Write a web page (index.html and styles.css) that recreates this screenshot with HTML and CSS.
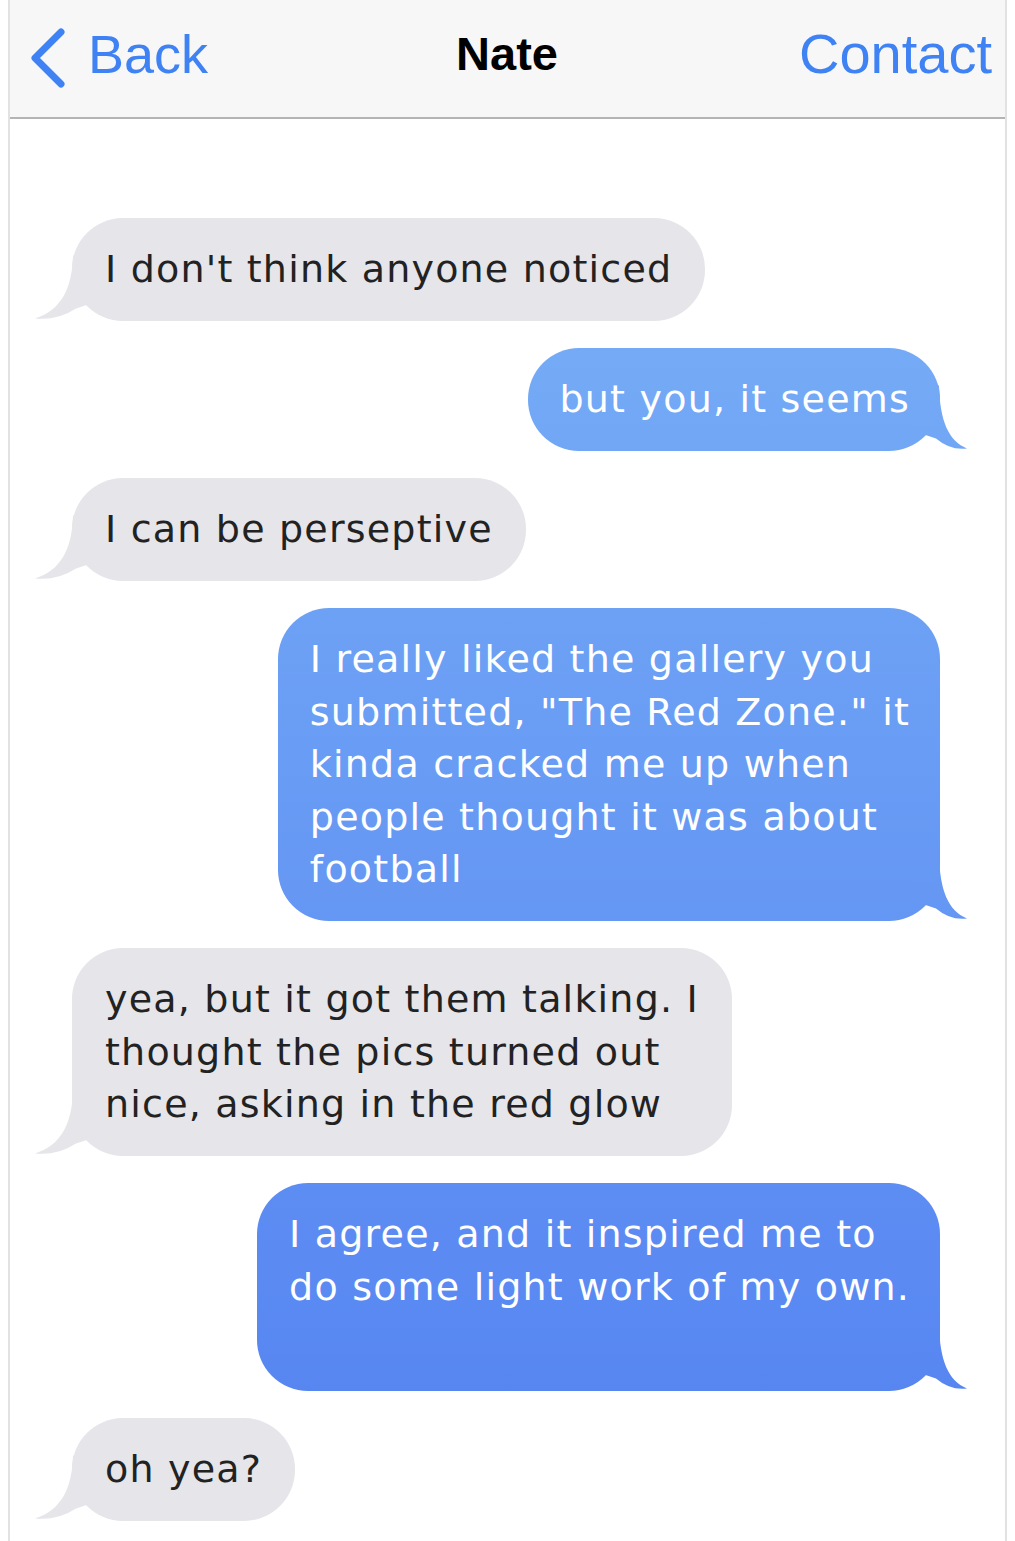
FILE: index.html
```html
<!DOCTYPE html>
<html lang="en">
<head>
  <meta charset="UTF-8">
  <title>Nate</title>
<link rel="stylesheet" href="styles.css">
</head>

<body>
<div class="phone">
    <header class="nav">
        <a class="back">
            <svg class="chevron" width="38" height="60" viewBox="0 0 38 60">
                <path d="M33 4 L7 30 L33 56" fill="none" stroke="currentColor" stroke-width="7" stroke-linecap="round" stroke-linejoin="round"/>
            </svg>
            <span>Back</span>
        </a>
        <h1 class="title">Nate</h1>
        <a class="contact">Contact</a>
    </header>
    <main class="thread">
        <div class="msg them">I don't think anyone noticed</div>
        <div class="msg me">but you, it seems</div>
        <div class="msg them">I can be perseptive</div>
        <div class="msg me">I really liked the gallery you<br>submitted, "The Red Zone." it<br>kinda cracked me up when<br>people thought it was about<br>football</div>
        <div class="msg them">yea, but it got them talking. I<br>thought the pics turned out<br>nice, asking in the red glow</div>
        <div class="msg me">I agree, and it inspired me to<br>do some light work of my own.<br>&nbsp;</div>
        <div class="msg them">oh yea?</div>
    </main>
</div>
</body>

</html>
```

FILE: styles.css
```css
body {
    margin: 0;
    background: #fff;
}
.phone {
    margin: 0 8px;
    min-height: 1541px;
    border-left: 2px solid #e2e2e2;
    border-right: 2px solid #e2e2e2;
    box-sizing: border-box;
}
.nav {
    display: grid;
    grid-template-columns: 1fr auto 1fr;
    align-items: center;
    padding: 0 13px 10px 18px;
    box-sizing: border-box;
    height: 119px;
    background: #f7f7f7;
    border-bottom: 2px solid #b4b4b4;
    font-family: "Liberation Sans", Arial, sans-serif;
}
.back, .contact {
    color: #3f82f4;
    font-size: 54px;
}
.back {
    display: flex;
    align-items: center;
    gap: 22px;
}
.chevron {
    margin-top: 8px;
}
.contact {
    justify-self: end;
    font-size: 56px;
}
.title {
    margin: 0 0 0 -6px;
    font-size: 47px;
    font-weight: bold;
    color: #000;
}
.thread {
    display: flex;
    flex-direction: column;
    gap: 27.5px;
    padding: 99px 65px 40px 62px;
}
.msg {
    position: relative;
    padding: 25px 33px;
    border-radius: 51px;
    line-height: 52.5px;
    font-family: "DejaVu Sans", Verdana, sans-serif;
    font-size: 38px;
    letter-spacing: 1.2px;
    white-space: nowrap;
}
.msg::after {
    content: "";
    position: absolute;
    bottom: 0;
    height: 70px;
    background: inherit;
}
.them {
    align-self: flex-start;
    background: #e5e5ea;
    color: #222;
}
.them::after {
    left: -38px;
    width: 66px;
    clip-path: path("M39 5 C38 40 26 60 1 68 Q24 70 42 58 L66 50 L66 5 Z");
}
.me {
    align-self: flex-end;
    padding: 25px 30px 25px 32px;
    background: linear-gradient(to bottom, #7eb6f7, #5381f1) fixed;
    color: #fff;
}
.me::after {
    right: -28px;
    width: 56px;
    clip-path: path("M27 5 C28 40 36 60 55 68 Q38 70 24 58 L0 50 L0 5 Z");
}
```
